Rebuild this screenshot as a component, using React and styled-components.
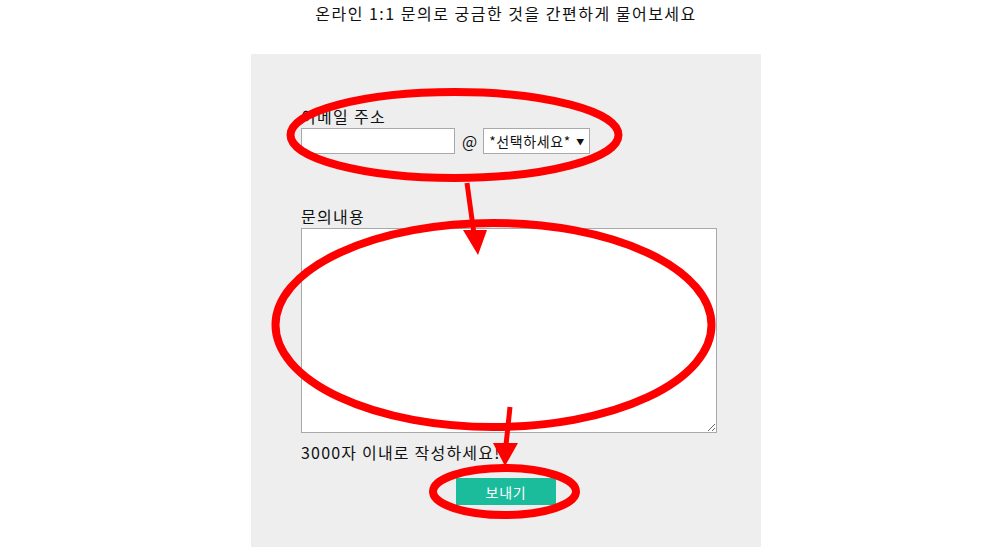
import React from "react";
import styled, { createGlobalStyle } from "styled-components";

const GlobalStyle = createGlobalStyle`
	html, body {
		margin: 0;
		padding: 0;
		background: #ffffff;
		font-family: "Noto Sans CJK KR", "Noto Sans", sans-serif;
		color: #111111;
	}
`;

const Page = styled.div`
	position: relative;
	width: 1003px;
	height: 547px;
	overflow: hidden;
	display: flex;
	flex-direction: column;
	align-items: center;
	padding-left: 9px;
	box-sizing: border-box;
`;

const Title = styled.h2`
	margin: 3px 0 0;
	height: 51px;
	font-size: 16px;
	font-weight: normal;
	line-height: 20px;
	letter-spacing: 1.5px;
`;

const Panel = styled.form`
	width: 510px;
	flex: 1;
	background: #eeeeee;
	padding: 52px 50px 0;
	box-sizing: border-box;
	display: flex;
	flex-direction: column;
`;

const Label = styled.label`
	font-size: 16px;
	line-height: 20px;
	height: 20px;
	margin-bottom: 2px;
	letter-spacing: 1.3px;
	margin-top: ${(p) => p.$top || 0}px;
`;

const EmailRow = styled.div`
	display: flex;
	align-items: center;
	height: 26px;
`;

const TextInput = styled.input`
	width: 154px;
	height: 26px;
	box-sizing: border-box;
	border: 1px solid #a9a9a9;
	background: #ffffff;
	margin: 0;
	padding: 2px 4px;
	font-size: 14px;
	outline: none;
`;

const At = styled.span`
	font-size: 16px;
	margin: 0 6px 0 7px;
	line-height: 20px;
`;

const SelectWrap = styled.div`
	position: relative;
	width: 107px;
	height: 26px;
`;

const Select = styled.select`
	appearance: none;
	width: 100%;
	height: 100%;
	box-sizing: border-box;
	border: 1px solid #a9a9a9;
	border-radius: 0;
	background: #ffffff;
	margin: 0;
	padding: 0 18px 0 5px;
	font-family: "Noto Sans CJK KR", "Noto Sans", sans-serif;
	font-size: 14px;
	letter-spacing: 0.6px;
	color: #111111;
	outline: none;
`;

const Caret = styled.span`
	position: absolute;
	right: 6px;
	top: 50%;
	transform: translateY(-50%);
	font-size: 8px;
	color: #111111;
	pointer-events: none;
`;

const TextArea = styled.textarea`
	width: 416px;
	height: 205px;
	box-sizing: border-box;
	border: 1px solid #a9a9a9;
	background: #ffffff;
	margin: 0;
	padding: 2px;
	outline: none;
`;

const Hint = styled.p`
	margin: 9px 0 0;
	font-size: 16px;
	line-height: 20px;
	letter-spacing: 1.2px;
`;

const SendButton = styled.button`
	align-self: center;
	margin-top: 16px;
	width: 100px;
	height: 27px;
	border: none;
	background: #1abc9c;
	color: #ffffff;
	font-family: "Noto Sans CJK KR", "Noto Sans", sans-serif;
	font-size: 14px;
	letter-spacing: 0.8px;
	cursor: pointer;
`;

const Marks = styled.svg`
	position: absolute;
	left: 0;
	top: 0;
	pointer-events: none;
`;

function Annotations() {
	return (
		<Marks width="1003" height="547" viewBox="0 0 1003 547">
			<g fill="none" stroke="#ff0000">
				<ellipse cx="454.5" cy="135" rx="164" ry="43" strokeWidth="8" />
				<ellipse cx="493.5" cy="325" rx="218" ry="102" strokeWidth="8" />
				<ellipse cx="504.5" cy="491.5" rx="71.5" ry="23.5" strokeWidth="8" />
				<line x1="467" y1="183" x2="474" y2="234" strokeWidth="5" />
				<line x1="510" y1="407" x2="506" y2="445" strokeWidth="5" />
			</g>
			<g fill="#ff0000">
				<polygon points="463,230 487,230 478,255" />
				<polygon points="493,443 518,443 505,466" />
			</g>
		</Marks>
	);
}

export default function App() {
	return (
		<>
			<GlobalStyle />
			<Page>
				<Title>온라인 1:1 문의로 궁금한 것을 간편하게 물어보세요</Title>
				<Panel onSubmit={(e) => e.preventDefault()}>
					<Label>이메일 주소</Label>
					<EmailRow>
						<TextInput type="text" />
						<At>@</At>
						<SelectWrap>
							<Select defaultValue="">
								<option value="">*선택하세요*</option>
								<option value="naver.com">naver.com</option>
								<option value="gmail.com">gmail.com</option>
							</Select>
							<Caret>▼</Caret>
						</SelectWrap>
					</EmailRow>
					<Label $top={52}>문의내용</Label>
					<TextArea />
					<Hint>3000자 이내로 작성하세요!</Hint>
					<SendButton type="submit">보내기</SendButton>
				</Panel>
				<Annotations />
			</Page>
		</>
	);
}
